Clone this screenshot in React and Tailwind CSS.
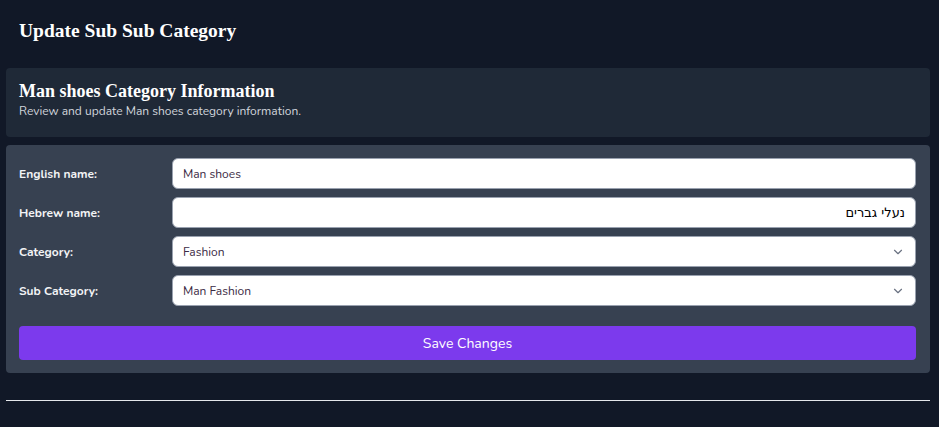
import { ChevronDown } from 'lucide-react';

const serif = { fontFamily: "'Liberation Serif', Georgia, serif" };

function Field({ label, children }) {
  return (
    <div className="flex items-center">
      <label className="w-[153px] shrink-0 text-[12px] font-bold text-gray-100">{label}</label>
      {children}
    </div>
  );
}

function Select({ value }) {
  return (
    <div className="flex-1 h-[31px] flex items-center justify-between bg-white rounded-md border border-gray-400 pl-[10px] pr-[10px]">
      <span className="text-[12px] text-[#3b2a44]">{value}</span>
      <ChevronDown size={14} strokeWidth={2} className="text-gray-500" />
    </div>
  );
}

export default function App() {
  return (
    <div
      className="min-h-[427px] bg-[#111827] pl-[6px] pr-[9px]"
      style={{ fontFamily: "'Nunito', 'Lato', 'Noto Sans', sans-serif" }}
    >
      {/* Page title */}
      <div className="h-[68px] flex items-center pl-[13px] pb-[7px]">
        <h1 className="text-[19.5px] font-bold text-white" style={serif}>
          Update Sub Sub Category
        </h1>
      </div>

      {/* Info header */}
      <div className="bg-[#1f2937] rounded-sm h-[69px] px-[13px] pt-[13px]">
        <h2 className="text-[18px] font-bold text-white leading-5" style={serif}>
          Man shoes Category Information
        </h2>
        <p className="text-[12px] text-gray-300 mt-[1px]">Review and update Man shoes category information.</p>
      </div>

      {/* Form */}
      <div className="mt-[8px] bg-[#374151] rounded-sm px-[13px] pt-[13px] pb-[13px] pr-[14px]">
        <div className="flex flex-col gap-[8px]">
          <Field label="English name:">
            <input
              readOnly
              value="Man shoes"
              className="flex-1 h-[31px] bg-white rounded-md border border-gray-400 px-[10px] text-[12px] text-[#3b2a44] outline-none"
            />
          </Field>
          <Field label="Hebrew name:">
            <input
              readOnly
              dir="rtl"
              value="נעלי גברים"
              className="flex-1 h-[31px] bg-white rounded-md border border-gray-400 px-[10px] text-[13px] text-black outline-none"
              style={{ fontFamily: "'DejaVu Sans', sans-serif" }}
            />
          </Field>
          <Field label="Category:">
            <Select value="Fashion" />
          </Field>
          <Field label="Sub Category:">
            <Select value="Man Fashion" />
          </Field>
        </div>
        <button className="mt-[20px] w-full h-[34px] bg-[#7c3aed] rounded-sm text-[14px] text-white">
          Save Changes
        </button>
      </div>

      <div className="mt-[27px] h-px bg-gray-200" />
    </div>
  );
}
